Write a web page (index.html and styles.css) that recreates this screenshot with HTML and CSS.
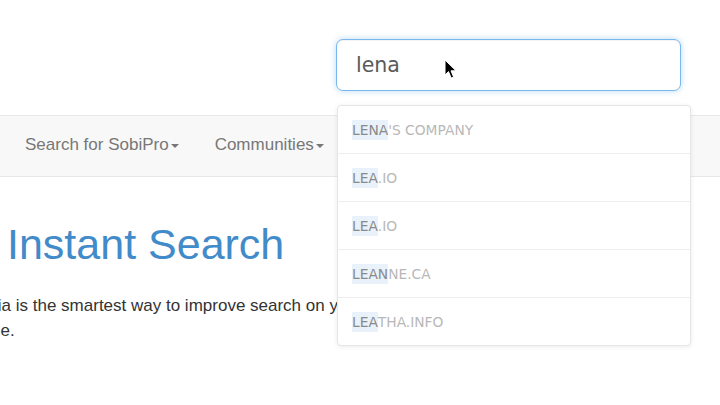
FILE: index.html
```html
<!DOCTYPE html>
<html>
<head>
<meta charset="utf-8">
<link rel="stylesheet" href="styles.css">
</head>
<body>
<header class="top">
  <div class="search">
    <input class="search-input" type="text" value="lena">
    <svg class="pointer" width="14" height="21" viewBox="0 0 14 21">
      <path d="M1 1 L1 16 L4.5 12.6 L7.2 19 L9.6 18 L7 11.8 L12 11.8 Z" fill="#000" stroke="#fff" stroke-width="1" stroke-linejoin="round"/>
    </svg>
    <ul class="suggest">
      <li class="item"><span class="hit">LENA</span>'S COMPANY</li>
      <li class="item"><span class="hit">LEA</span>.IO</li>
      <li class="item"><span class="hit">LEA</span>.IO</li>
      <li class="item"><span class="hit">LEAN</span>NE.CA</li>
      <li class="item"><span class="hit">LEA</span>THA.INFO</li>
    </ul>
  </div>
</header>
<nav class="navbar">
  <ul class="nav">
    <li class="nav-link">Search for SobiPro<span class="caret"></span></li>
    <li class="nav-link">Communities<span class="caret"></span></li>
  </ul>
</nav>
<main class="content">
  <h1 class="title">Instant Search</h1>
  <p class="lead">Algolia is the smartest way to improve search on your website or mobile.</p>
</main>
</body>
</html>
```
FILE: styles.css
```css
html, body {
  margin: 0;
  padding: 0;
  width: 720px;
  height: 405px;
  overflow: hidden;
  background: #fff;
  font-family: "Liberation Sans", Arial, sans-serif;
}

.top {
  height: 115px;
  display: flex;
  justify-content: flex-end;
  align-items: flex-start;
}

.search {
  position: relative;
  margin-top: 39px;
  margin-right: 39px;
  width: 345px;
  height: 52px;
}

.search-input {
  box-sizing: border-box;
  width: 345px;
  height: 52px;
  margin: 0;
  padding: 0 0 0 19px;
  border: 1px solid #7ab7ec;
  border-radius: 7px;
  outline: none;
  background: #fff;
  box-shadow: inset 0 1px 1px rgba(0,0,0,.05), 0 0 6px rgba(102,175,233,.45);
  font-family: "DejaVu Sans", sans-serif;
  font-size: 20.5px;
  color: #5a5a5a;
}

.pointer {
  position: absolute;
  left: 108px;
  top: 20px;
}

.suggest {
  position: absolute;
  left: 1px;
  top: 66px;
  width: 354px;
  box-sizing: border-box;
  margin: 0;
  padding: 0;
  list-style: none;
  background: #fff;
  border: 1px solid #e6e6e6;
  border-radius: 4px;
  box-shadow: 0 1px 5px rgba(0,0,0,.08);
  z-index: 5;
}

.item {
  height: 47px;
  display: flex;
  align-items: center;
  padding-left: 14px;
  border-bottom: 1px solid #ededed;
  font-family: "DejaVu Sans", sans-serif;
  font-size: 13.8px;
  color: #b8b8b8;
  white-space: pre;
}

.item:last-child {
  border-bottom: none;
}

.hit {
  display: inline-block;
  line-height: 20px;
  background: #e9f2fb;
  color: #8a8a8a;
}

.navbar {
  height: 60px;
  background: #f8f8f8;
  border-top: 1px solid #e7e7e7;
  border-bottom: 1px solid #e7e7e7;
}

.nav {
  display: flex;
  margin: 0;
  padding: 19px 0 0 7px;
  list-style: none;
}

.nav-link {
  padding: 0 18px;
  font-size: 17px;
  line-height: 20px;
  color: #777;
  display: flex;
  align-items: center;
}

.caret {
  display: inline-block;
  width: 0;
  height: 0;
  margin-left: 2px;
  margin-top: 2px;
  border-top: 4px solid #777;
  border-left: 4px solid transparent;
  border-right: 4px solid transparent;
}

.content {
  padding: 0;
}

.title {
  margin: 44px 0 0 7px;
  font-size: 43px;
  line-height: 1.1;
  font-weight: normal;
  color: #428bca;
}

.lead {
  margin: 25px 0 0 -40px;
  width: 520px;
  font-size: 17px;
  line-height: 25px;
  color: #333;
}
```
